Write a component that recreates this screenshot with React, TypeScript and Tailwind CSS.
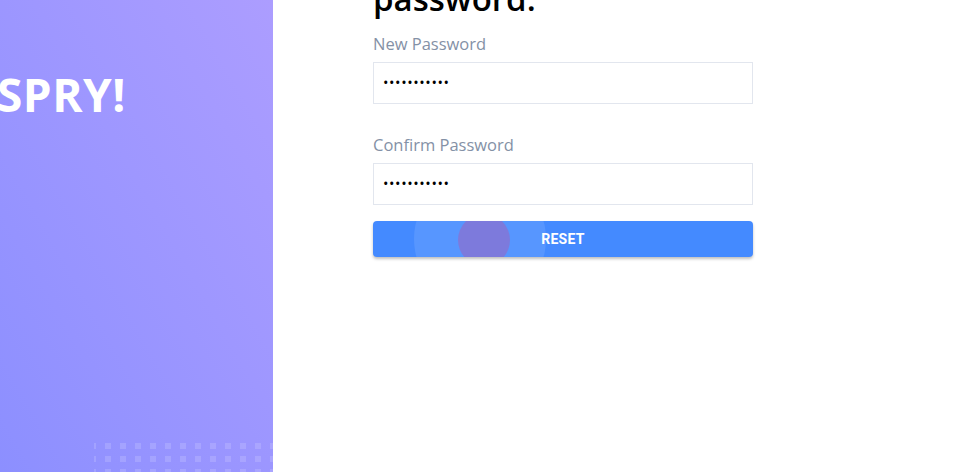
import React from "react";

const cols = Array.from({ length: 12 });
const rows = Array.from({ length: 3 });

export default function App() {
  return (
    <div className="flex h-[472px] w-[960px] overflow-hidden bg-white" style={{ fontFamily: "'Open Sans', sans-serif" }}>
      <div className="relative w-[273px] shrink-0 overflow-hidden bg-gradient-to-bl from-[#ac9dff] to-[#8c8fff]">
        <div className="ml-[-3px] mt-[66px] text-[46px] font-bold leading-[56px] tracking-[0.5px] text-white">
          SPRY!
        </div>
        <div className="absolute left-[94px] top-[443px] flex flex-col gap-[7px]">
          {rows.map((_, r) => (
            <div key={r} className="flex gap-[9px]">
              <div className="h-[6px] w-[2px] bg-white/15" />
              {cols.map((_, c) => (
                <div key={c} className="h-[6px] w-[6px] bg-white/15" />
              ))}
            </div>
          ))}
        </div>
      </div>
      <div className="flex-1 pl-[100px]">
        <div className="w-[380px]">
          <div className="mt-[-21px] text-[33px] font-semibold leading-[40px] text-black">password.</div>
          <label className="mt-[13px] block text-[16.5px] leading-[24px] text-[#8491a6]">New Password</label>
          <div className="mt-[6px] flex h-[42px] items-center border border-[#e2e6ee] px-[9px] text-[14.5px] tracking-[0.6px] text-black">
            •••••••••••
          </div>
          <label className="mt-[29px] block text-[16.5px] leading-[24px] text-[#8491a6]">Confirm Password</label>
          <div className="mt-[6px] flex h-[42px] items-center border border-[#e2e6ee] px-[9px] text-[14.5px] tracking-[0.6px] text-black">
            •••••••••••
          </div>
          <button className="relative mt-[16px] flex h-[36px] w-full items-center justify-center overflow-hidden rounded-[4px] bg-[#448aff] text-[14px] font-bold tracking-[0.3px] text-white shadow-[0_2px_3px_rgba(0,0,0,0.25)]" style={{ fontFamily: "Roboto, sans-serif" }}>
            <span className="absolute left-[41px] top-[-48px] h-[132px] w-[132px] rounded-full bg-white/10" />
            <span className="absolute left-[85px] top-[-7px] h-[52px] w-[52px] rounded-full bg-[rgba(214,60,140,0.3)]" />
            <span className="relative">RESET</span>
          </button>
        </div>
      </div>
    </div>
  );
}
